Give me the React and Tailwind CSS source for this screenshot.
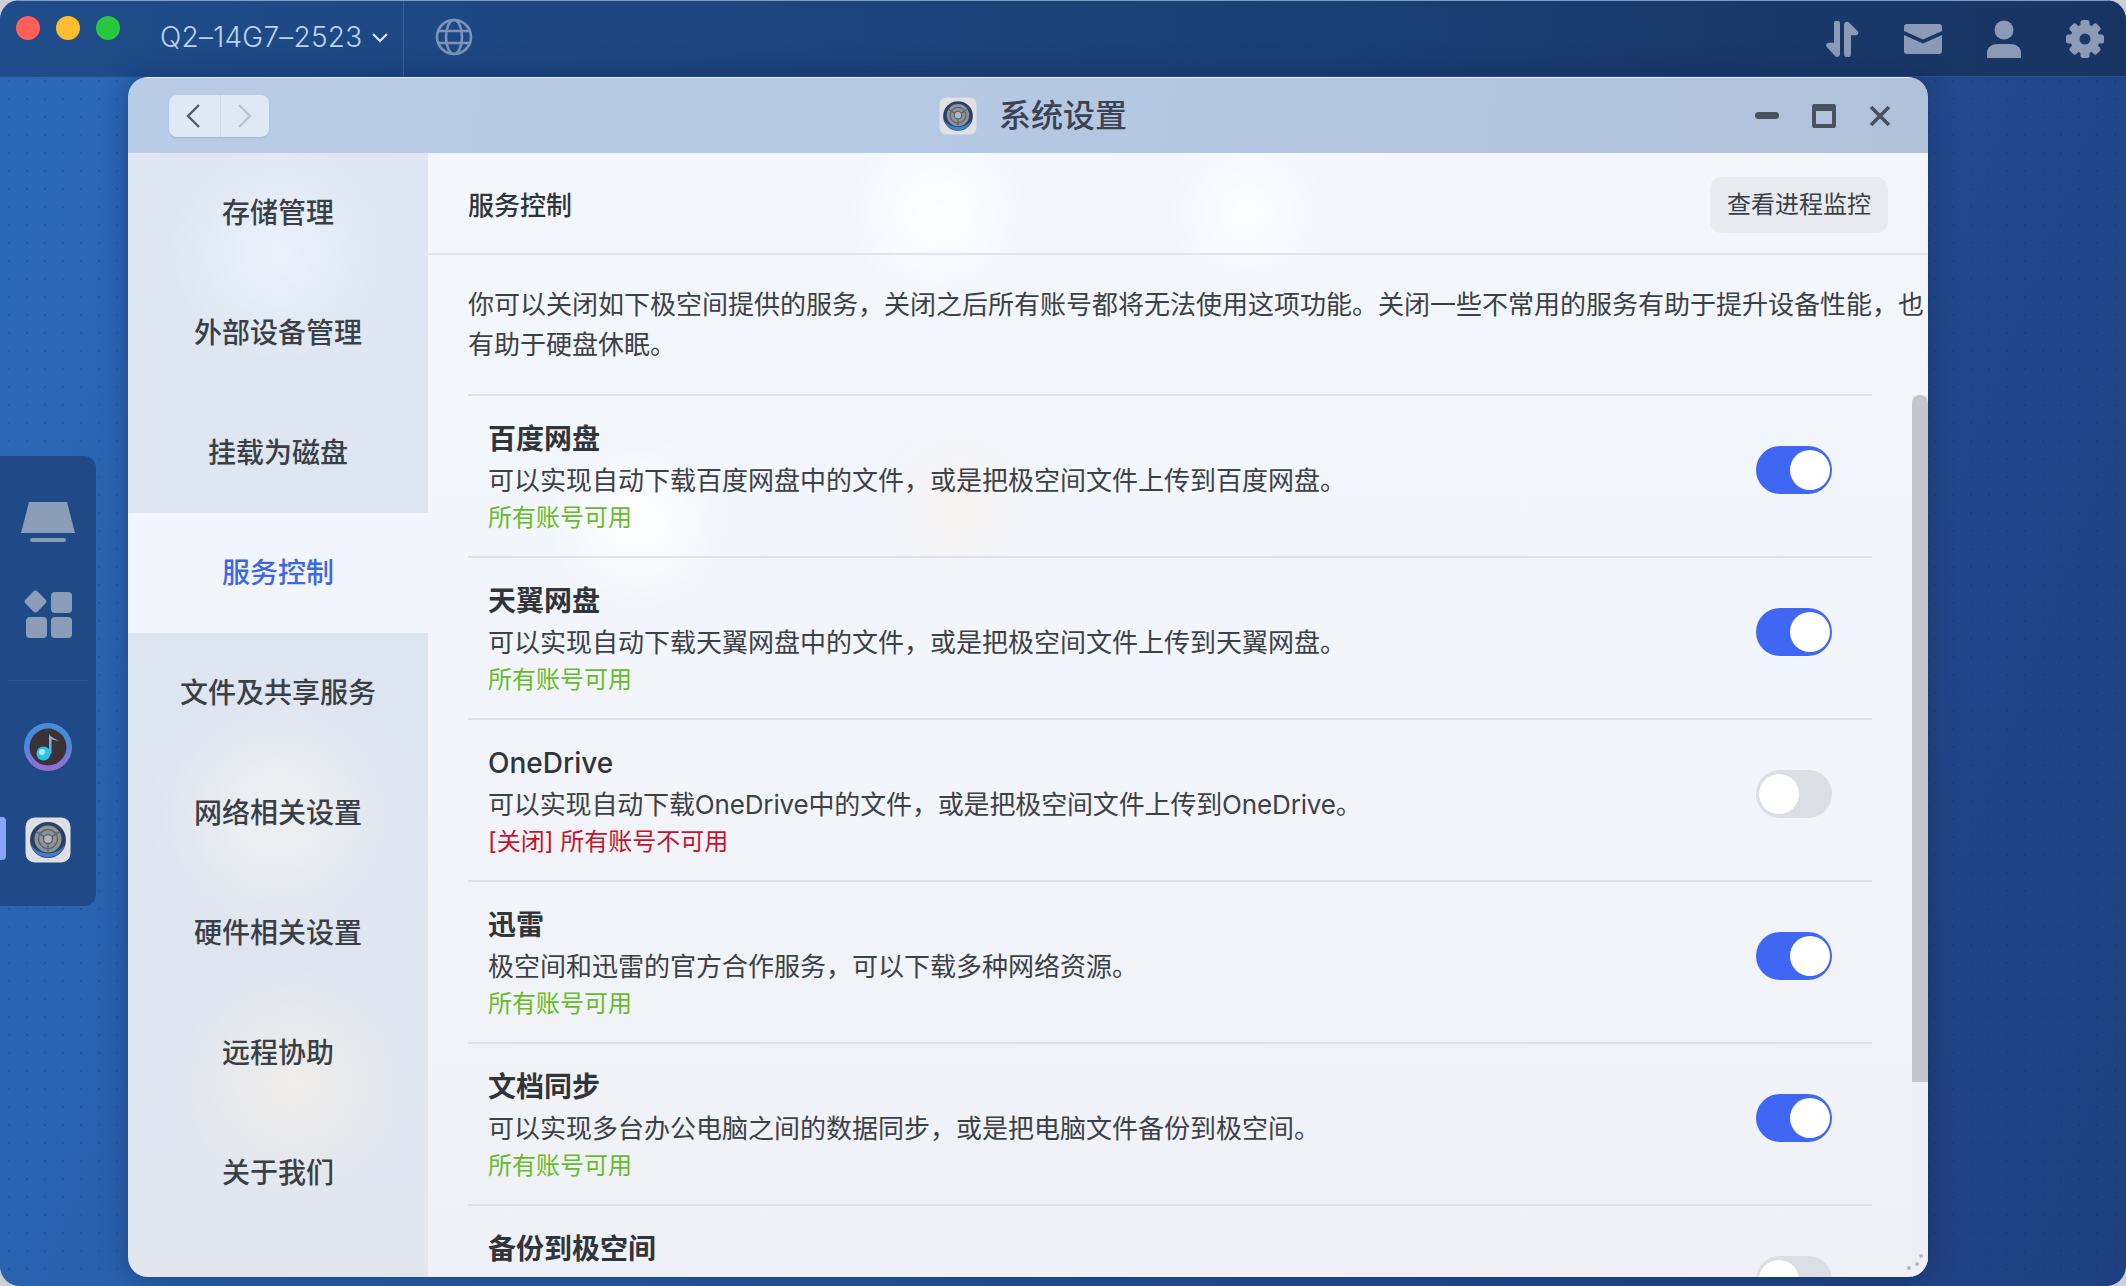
const navItems = [
  "存储管理",
  "外部设备管理",
  "挂载为磁盘",
  "服务控制",
  "文件及共享服务",
  "网络相关设置",
  "硬件相关设置",
  "远程协助",
  "关于我们",
];

const services = [
  {
    name: "百度网盘",
    desc: "可以实现自动下载百度网盘中的文件，或是把极空间文件上传到百度网盘。",
    on: true,
  },
  {
    name: "天翼网盘",
    desc: "可以实现自动下载天翼网盘中的文件，或是把极空间文件上传到天翼网盘。",
    on: true,
  },
  {
    name: "OneDrive",
    desc: "可以实现自动下载OneDrive中的文件，或是把极空间文件上传到OneDrive。",
    on: false,
    latin: true,
  },
  {
    name: "迅雷",
    desc: "极空间和迅雷的官方合作服务，可以下载多种网络资源。",
    on: true,
  },
  {
    name: "文档同步",
    desc: "可以实现多台办公电脑之间的数据同步，或是把电脑文件备份到极空间。",
    on: true,
  },
  // only the title of this row is above the window edge
  {
    name: "备份到极空间",
    on: false,
  },
];

function SettingsIcon({ size }) {
  return (
    <svg width={size} height={size} viewBox="0 0 46 46">
      <rect x="0.5" y="0.5" width="45" height="45" rx="9" fill="#dfe0e4" />
      <circle cx="23" cy="23" r="18" fill="#2c3f66" />
      <path d="M6 27a17.5 17.5 0 0 0 34 0a18 14 0 0 1-34 0z" fill="#3f7fd0" />
      <circle cx="23" cy="22" r="13.5" fill="#8f9498" />
      <circle cx="23" cy="22" r="9.5" fill="none" stroke="#5d6670" strokeWidth="1.5" />
      <circle cx="23" cy="22" r="4.5" fill="#b4b7b8" stroke="#5d6670" strokeWidth="1.5" />
      <path d="M23 26.5v9M19 19.5l-8-5M27 19.5l8-5" stroke="#5d6670" strokeWidth="1.5" />
    </svg>
  );
}

function MusicIcon() {
  return (
    <svg width="48" height="48" viewBox="0 0 48 48">
      <defs>
        <linearGradient id="musicRing" x1="0" y1="0" x2="0" y2="1">
          <stop offset="0.4" stopColor="#4a8bdc" />
          <stop offset="1" stopColor="#9a6bd0" />
        </linearGradient>
        <linearGradient id="musicNote" x1="0" y1="1" x2="1" y2="0">
          <stop offset="0" stopColor="#28c4ee" />
          <stop offset="1" stopColor="#ee9cc0" />
        </linearGradient>
      </defs>
      <circle cx="24" cy="24" r="24" fill="url(#musicRing)" />
      <circle cx="24" cy="24" r="18.5" fill="#3a3238" />
      <path
        d="M25 30V11c1 3 6 4 10 7.500c-3.500-1.500-6-2-7.500-2V31z"
        fill="url(#musicNote)"
      />
      <circle cx="19.5" cy="30.5" r="7" fill="#2cc0ea" />
      <circle cx="18" cy="29" r="3" fill="#a8ecfa" />
    </svg>
  );
}

function Toggle({ on }) {
  return (
    <div
      className={
        on
          ? "w-[76px] h-[48px] rounded-full bg-[#4066f4] flex items-center justify-end px-[2px] shrink-0"
          : "w-[76px] h-[48px] rounded-full bg-[#dcdee5] flex items-center justify-start px-[3px] shrink-0"
      }
    >
      <div className="w-[40px] h-[40px] rounded-full bg-white" />
    </div>
  );
}

function ServiceRow({ service }) {
  return (
    <div className="flex justify-between items-start h-[162px] border-t-2 border-[#dfe1e8] pl-[20px] pr-[40px]">
      <div className="pt-[23px]">
        <p
          className={
            service.latin
              ? "text-[28px] leading-[40px] font-medium text-[#30343b]"
              : "text-[28px] leading-[40px] font-semibold text-[#30343b]"
          }
        >
          {service.name}
        </p>
        {service.desc && (
          <>
            <p
              className={
                service.latin
                  ? "text-[26px] leading-[40px] mt-[2px] text-[#3c4047] tracking-[-0.15px]"
                  : "text-[26px] leading-[40px] mt-[2px] text-[#3c4047]"
              }
            >
              {service.desc}
            </p>
            {service.on ? (
              <p className="text-[24px] leading-[36px] -mt-[1px] text-[#68bb2a]">
                所有账号可用
              </p>
            ) : (
              <p className="text-[24px] leading-[36px] -mt-[1px] text-[#c4122f]">
                [关闭] 所有账号不可用
              </p>
            )}
          </>
        )}
      </div>
      <div className="pt-[50px]">
        <Toggle on={service.on} />
      </div>
    </div>
  );
}

export default function App() {
  return (
    <div className="w-[2126px] h-[1286px] bg-[#ccd0d4] overflow-hidden font-['Inter','Noto_Sans_CJK_SC',sans-serif]">
      <div className="h-full rounded-[20px] overflow-hidden flex flex-col bg-[radial-gradient(rgba(12,34,90,0.18)_1px,transparent_1.6px),linear-gradient(110deg,#2b69b9_0%,#27589f_45%,#1f3f80_100%)] bg-[length:18px_18px,100%_100%]">
        {/* Top bar */}
        <div className="h-[77px] shrink-0 flex items-center border-t border-[#7e9cc4] border-b border-b-[#2a5088] bg-[linear-gradient(90deg,#1f4c8a_0%,#1c4279_50%,#183462_100%)]">
          <div className="flex items-center gap-[16px] pl-[16px] w-[148px] self-start pt-[15px]">
            <div className="w-[24px] h-[24px] rounded-full bg-[#ff5f57] shrink-0" />
            <div className="w-[24px] h-[24px] rounded-full bg-[#febc2e] shrink-0" />
            <div className="w-[24px] h-[24px] rounded-full bg-[#27c840] shrink-0" />
          </div>
          <div className="ml-[12px] w-[244px] flex items-center h-full pb-[3px] border-r border-[#ffffff26]">
            <span className="text-[28px] font-light text-[#b9d4f0] tracking-[0.25px]">
              Q2–14G7–2523
            </span>
            <svg width="18" height="12" viewBox="0 0 18 12" className="ml-[8px]">
              <path d="M2 3l7 7l7-7" fill="none" stroke="#d6e4f4" strokeWidth="2.2" />
            </svg>
          </div>
          <svg width="38" height="38" viewBox="0 0 38 38" className="ml-[31px] mb-[3px]" fill="none" stroke="#7b93b8" strokeWidth="2.6">
            <circle cx="19" cy="19" r="17" />
            <ellipse cx="19" cy="19" rx="8" ry="17" />
            <path d="M3 13h32M3 25h32" />
          </svg>
          <div className="ml-auto flex items-center gap-[44px] pr-[22px]">
            <svg width="36" height="36" viewBox="0 0 36 36" fill="#8b9bb7">
              <path d="M10 2.500a3 3 0 0 1 6 0V33a3 3 0 0 1-4.500 2.500L2.800 26a2.500 2.500 0 0 1 1.800-4.200H10z" />
              <path d="M20 3.500a3 3 0 0 1 4.800-2.200L33.600 10a2.500 2.500 0 0 1-1.800 4.200H27V33a3.500 3.500 0 0 1-7 0z" />
            </svg>
            <svg width="38" height="30" viewBox="0 0 38 30" fill="#8b9bb7">
              <path d="M3 0h32a3 3 0 0 1 3 3v4L19 15.500L0 7V3a3 3 0 0 1 3-3z" />
              <path d="M0 11l19 8.500L38 11v16a3 3 0 0 1-3 3H3a3 3 0 0 1-3-3z" />
            </svg>
            <svg width="36" height="38" viewBox="0 0 36 38" fill="#8b9bb7">
              <circle cx="18" cy="10" r="9.500" />
              <path d="M1 38v-5c0-6 5-9 11-9h12c6 0 11 3 11 9v5z" />
            </svg>
            <svg width="38" height="38" viewBox="0 0 38 38">
              <g fill="#8b9bb7">
                <circle cx="19" cy="19" r="14.500" />
                <rect x="14.500" y="0" width="9" height="38" rx="2.500" />
                <rect x="14.500" y="0" width="9" height="38" rx="2.500" transform="rotate(45 19 19)" />
                <rect x="14.500" y="0" width="9" height="38" rx="2.500" transform="rotate(90 19 19)" />
                <rect x="14.500" y="0" width="9" height="38" rx="2.500" transform="rotate(135 19 19)" />
              </g>
              <circle cx="19" cy="19" r="5.500" fill="#1a3868" />
            </svg>
          </div>
        </div>

        {/* Desktop */}
        <div className="flex-1 flex items-start min-h-0">
          {/* Dock */}
          <div className="relative w-[96px] h-[450px] mt-[379px] shrink-0 rounded-r-[12px] bg-[#1f4987] flex flex-col items-center pt-[46px]">
            <svg width="54" height="40" viewBox="0 0 54 40" fill="#8b9db9">
              <path d="M8 0h38l8 31H0z" />
              <rect x="9" y="36" width="36" height="4" rx="2" />
            </svg>
            <svg width="48" height="48" viewBox="0 0 48 48" fill="#8b9db9" className="mt-[48px]">
              <rect x="3" y="3" width="17" height="17" rx="3" transform="rotate(45 11.500 11.500)" />
              <rect x="27" y="2" width="21" height="21" rx="4" />
              <rect x="2" y="27" width="21" height="21" rx="4" />
              <rect x="27" y="27" width="21" height="21" rx="4" />
            </svg>
            <div className="w-[80px] h-[1px] bg-[#2c548f] mt-[42px]" />
            <div className="mt-[42px]">
              <MusicIcon />
            </div>
            <div className="mt-[46px]">
              <SettingsIcon size={46} />
            </div>
            <div className="absolute left-0 top-[361px] w-[6px] h-[43px] rounded-r-[4px] bg-[#8aa4f8]" />
          </div>

          {/* Window */}
          <div className="ml-[32px] w-[1800px] h-[1200px] shrink-0 rounded-[20px] overflow-hidden flex flex-col shadow-[0_0_28px_rgba(10,30,70,0.4)]">
            <div className="h-[76px] shrink-0 grid grid-cols-[1fr_auto_1fr] items-center border-t border-[#e6edf7] bg-[linear-gradient(100deg,#bacde8_0%,#b4c8e4_50%,#b2c1da_100%)]">
              <div className="pl-[41px]">
                <div className="w-[100px] h-[42px] rounded-[8px] bg-[#dfe8f5] flex items-center shadow-[0_1px_2px_rgba(60,80,120,0.2)]">
                  <div className="flex-1 h-full flex items-center justify-center pr-[3px] border-r border-[#cdd6e4]">
                    <svg width="16" height="26" viewBox="0 0 16 26" fill="none" stroke="#565b63" strokeWidth="2.400">
                      <path d="M14 2L3 13l11 11" />
                    </svg>
                  </div>
                  <div className="flex-1 h-full flex items-center justify-center">
                    <svg width="16" height="26" viewBox="0 0 16 26" fill="none" stroke="#bcc1c8" strokeWidth="2.400">
                      <path d="M2 2l11 11L2 24" />
                    </svg>
                  </div>
                </div>
              </div>
              <div className="flex items-center gap-[22px] ml-[10px]">
                <SettingsIcon size={38} />
                <span className="text-[32px] font-medium text-[#3b4350]">系统设置</span>
              </div>
              <div className="flex items-center justify-end gap-[33px] pr-[37px]">
                <div className="w-[24px] h-[7px] rounded-full bg-[#48525f]" />
                <div className="w-[24px] h-[24px] rounded-[2px] border-[4px] border-t-[7px] border-[#48525f]" />
                <svg width="22" height="22" viewBox="0 0 22 22" stroke="#48525f" strokeWidth="3.600">
                  <path d="M2 2l18 18M20 2L2 20" />
                </svg>
              </div>
            </div>

            <div className="flex-1 flex min-h-0">
              {/* Sidebar */}
              <div className="w-[300px] shrink-0 bg-[radial-gradient(circle_at_150px_100px,rgba(240,246,252,0.7),transparent_110px),radial-gradient(circle_at_150px_660px,rgba(246,244,242,0.75),transparent_130px),radial-gradient(circle_at_165px_930px,rgba(246,240,232,0.7),transparent_120px),linear-gradient(180deg,#dee7f3_0%,#dde5f0_50%,#e2e6ef_100%)]">
                {navItems.map((item) => (
                  <div
                    key={item}
                    className={
                      item === "服务控制"
                        ? "h-[120px] flex items-center justify-center text-[28px] font-medium text-[#4066e6] bg-[#f2f6fc]"
                        : "h-[120px] flex items-center justify-center text-[28px] font-medium text-[#3a3f47]"
                    }
                  >
                    {item}
                  </div>
                ))}
              </div>

              {/* Main */}
              <div className="relative flex-1 overflow-hidden bg-[radial-gradient(circle_at_510px_60px,rgba(255,255,255,0.9),transparent_90px),radial-gradient(circle_at_820px_60px,rgba(255,255,255,0.7),transparent_80px),radial-gradient(circle_at_530px_350px,rgba(255,243,232,0.5),transparent_80px),radial-gradient(circle_at_210px_370px,rgba(255,255,255,0.9),transparent_90px),linear-gradient(180deg,#f3f7fd_0%,#f2f4fa_60%,#eff1f7_100%)]">
                <div className="h-[102px] flex items-center justify-between pt-[4px] pl-[40px] pr-[40px] border-b-2 border-[#e1e4eb]">
                  <h1 className="text-[26px] font-medium text-[#30343b]">服务控制</h1>
                  <button className="w-[178px] h-[56px] rounded-[12px] bg-[#e8eaf0] text-[24px] text-[#3a3f47]">
                    查看进程监控
                  </button>
                </div>
                <p className="ml-[40px] w-[1460px] mt-[30px] text-[26px] leading-[40px] text-[#3c4047]">
                  你可以关闭如下极空间提供的服务，关闭之后所有账号都将无法使用这项功能。关闭一些不常用的服务有助于提升设备性能，也有助于硬盘休眠。
                </p>
                <div className="ml-[40px] w-[1404px] mt-[29px]">
                  {services.map((service) => (
                    <ServiceRow key={service.name} service={service} />
                  ))}
                </div>

                {/* Scrollbar */}
                <div className="absolute right-0 top-[242px] w-[16px] h-[882px] bg-[#eeeff4]">
                  <div className="w-full h-[687px] rounded-t-[8px] bg-[#c3c5cc]" />
                </div>
                <svg width="24" height="24" viewBox="0 0 24 24" fill="#b6b8c2" className="absolute right-[2px] bottom-[2px]">
                  <circle cx="19" cy="5" r="2" />
                  <circle cx="15" cy="13" r="2" />
                  <circle cx="7" cy="17" r="2" />
                </svg>
              </div>
            </div>
          </div>
        </div>
      </div>
    </div>
  );
}
